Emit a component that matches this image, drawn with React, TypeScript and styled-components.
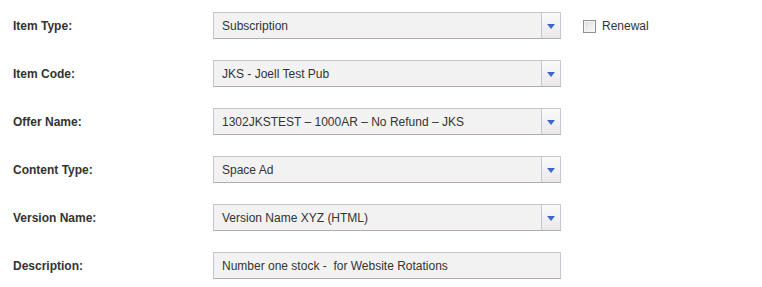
import React from 'react';
import styled, { createGlobalStyle } from 'styled-components';

const GlobalStyle = createGlobalStyle`
  html, body {
    margin: 0;
    padding: 0;
    background: #fff;
  }
  body {
    font-family: "Liberation Sans", Arial, sans-serif;
    color: #333;
  }
`;

const Form = styled.div`
  display: flex;
  flex-direction: column;
  gap: 21px;
  padding: 12px 0 0 13px;
`;

const Row = styled.div`
  display: flex;
  align-items: center;
  height: 27px;
`;

const Label = styled.label`
  width: 200px;
  font-size: 12px;
  font-weight: bold;
  color: #333;
`;

const Field = styled.div`
  display: flex;
  box-sizing: border-box;
  width: 348px;
  height: 27px;
  border: 1px solid #c3c7d2;
  border-bottom-color: #a9aebb;
  background: #f2f2f2;
`;

const Value = styled.div`
  flex: 1;
  display: flex;
  align-items: center;
  padding-left: 8px;
  font-size: 12px;
  color: #333;
  white-space: pre;
`;

const Trigger = styled.div`
  width: 18px;
  display: flex;
  align-items: center;
  justify-content: center;
  border-left: 1px solid #c3c7d2;
  background: linear-gradient(#fafafa, #e9e9e9);
`;

const Arrow = styled.span`
  width: 0;
  height: 0;
  margin-top: 1px;
  border-left: 4.5px solid transparent;
  border-right: 4.5px solid transparent;
  border-top: 5px solid #3d66c9;
`;

const CheckWrap = styled.label`
  display: flex;
  align-items: center;
  gap: 6px;
  margin-left: 22px;
  font-size: 12px;
  color: #333;
`;

const Box = styled.span`
  box-sizing: border-box;
  width: 13px;
  height: 13px;
  margin-top: 1px;
  border: 1px solid #8f8f8f;
  background: linear-gradient(135deg, #dcdcdc, #fbfbfb);
  box-shadow: inset 0 0 0 1px #f4f4f4;
`;

type Item = { label: string; value: string; select?: boolean; renewal?: boolean };

const items: Item[] = [
  { label: 'Item Type:', value: 'Subscription', select: true, renewal: true },
  { label: 'Item Code:', value: 'JKS - Joell Test Pub', select: true },
  { label: 'Offer Name:', value: '1302JKSTEST \u2013 1000AR \u2013 No Refund \u2013 JKS', select: true },
  { label: 'Content Type:', value: 'Space Ad', select: true },
  { label: 'Version Name:', value: 'Version Name XYZ (HTML)', select: true },
  { label: 'Description:', value: 'Number one stock -  for Website Rotations' },
];

export default function App() {
  return (
    <>
      <GlobalStyle />
      <Form>
        {items.map((it) => (
          <Row key={it.label}>
            <Label>{it.label}</Label>
            <Field>
              <Value>{it.value}</Value>
              {it.select && (
                <Trigger>
                  <Arrow />
                </Trigger>
              )}
            </Field>
            {it.renewal && (
              <CheckWrap>
                <Box />
                Renewal
              </CheckWrap>
            )}
          </Row>
        ))}
      </Form>
    </>
  );
}
